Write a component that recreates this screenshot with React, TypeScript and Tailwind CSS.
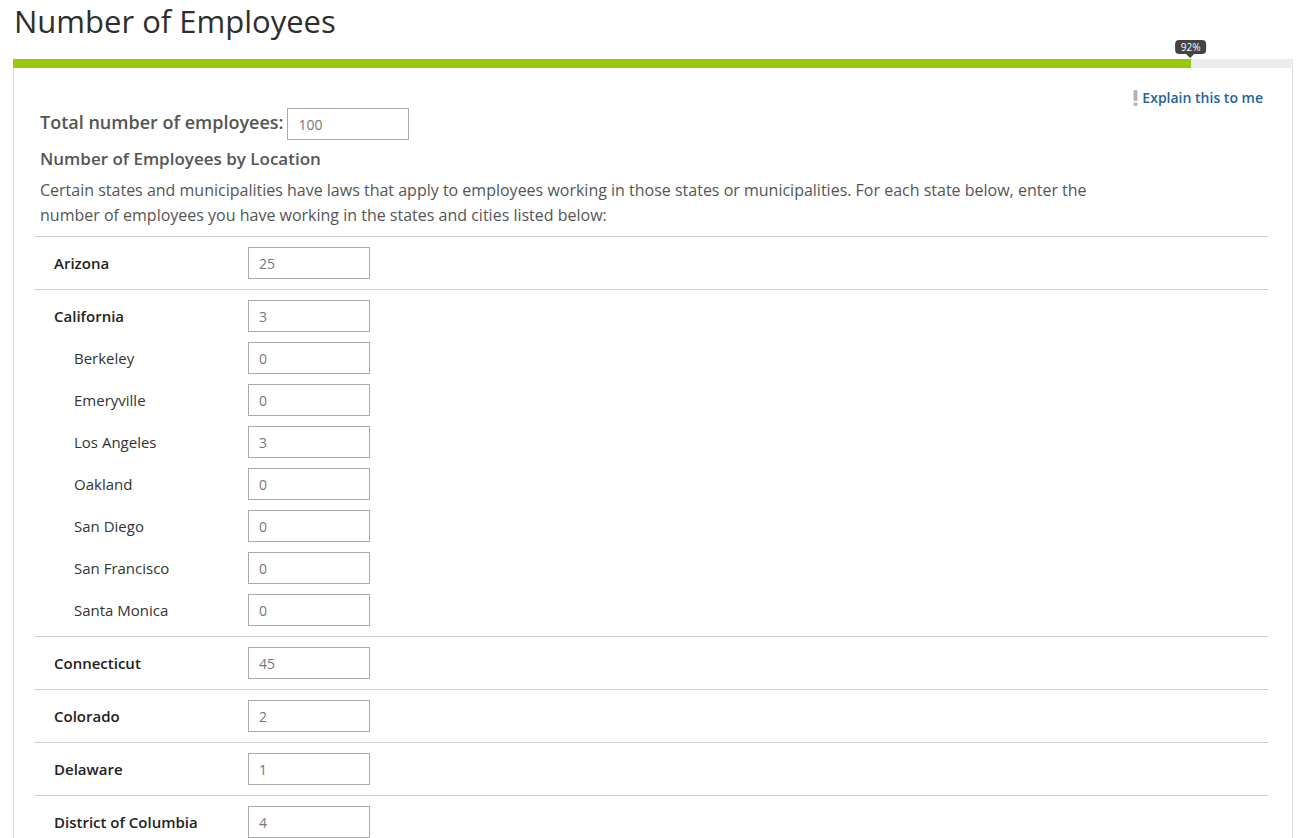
import React from "react";

interface Location {
  name: string;
  value: string;
  cities?: { name: string; value: string }[];
}

const LOCATIONS: Location[] = [
  { name: "Arizona", value: "25" },
  {
    name: "California",
    value: "3",
    cities: [
      { name: "Berkeley", value: "0" },
      { name: "Emeryville", value: "0" },
      { name: "Los Angeles", value: "3" },
      { name: "Oakland", value: "0" },
      { name: "San Diego", value: "0" },
      { name: "San Francisco", value: "0" },
      { name: "Santa Monica", value: "0" },
    ],
  },
  { name: "Connecticut", value: "45" },
  { name: "Colorado", value: "2" },
  { name: "Delaware", value: "1" },
  { name: "District of Columbia", value: "4" },
];

const PROGRESS = 92;

function NumberInput({ value }: { value: string }) {
  return (
    <input
      type="text"
      defaultValue={value}
      className="h-[32px] w-[122px] border border-[#ababab] bg-white px-[10px] text-[14px] text-[#777] outline-none"
    />
  );
}

export default function App() {
  return (
    <div className="h-[838px] overflow-hidden bg-white font-['Open_Sans',sans-serif]">
      {/* Page title */}
      <h1 className="pl-[14px] pt-[2px] text-[31px] leading-[38px] font-normal text-[#2e2e2e]">
        Number of Employees
      </h1>

      {/* Progress bar */}
      <div className="relative mx-[13px] mt-[19px] h-[9px] bg-[#ececec]">
        <div className="h-full bg-[#99c80c]" style={{ width: `${PROGRESS}%` }} />
        <div
          className="absolute bottom-full mb-[1px] -translate-x-1/2"
          style={{ left: `${PROGRESS}%` }}
        >
          <div className="rounded-[4px] bg-[#444] px-[6px] text-[10px] leading-[14px] text-white">
            {PROGRESS}%
          </div>
          <div className="mx-auto h-0 w-0 border-x-[4px] border-t-[4px] border-x-transparent border-t-[#444]" />
        </div>
      </div>

      {/* Panel */}
      <div className="mx-[13px] border border-t-0 border-[#dcdcdc] pl-[20px] pr-[24px] pt-[19px]">
        {/* Explain link */}
        <div className="flex h-[21px] items-center justify-end pr-[5px]">
          <a href="#" className="flex items-center gap-[4px] text-[14px] font-semibold text-[#22639b]">
            <svg width="5" height="16" viewBox="0 0 5 16">
              <rect x="0.5" y="0" width="4" height="11" rx="1" fill="#b5b5b5" />
              <rect x="0.5" y="12.5" width="4" height="3.5" rx="1" fill="#b5b5b5" />
            </svg>
            Explain this to me
          </a>
        </div>

        {/* Total */}
        <div className="flex items-center pl-[6px]">
          <label className="mr-[4px] mb-[3px] text-[18px] font-semibold text-[#555]">
            Total number of employees:
          </label>
          <NumberInput value="100" />
        </div>

        <h2 className="mt-[7px] pl-[6px] text-[17px] leading-[24px] font-semibold text-[#555]">
          Number of Employees by Location
        </h2>
        <p className="mb-[8px] mt-[7px] w-[1080px] pl-[6px] text-[16px] leading-[25px] text-[#555]">
          Certain states and municipalities have laws that apply to employees working in those
          states or municipalities. For each state below, enter the number of employees you have
          working in the states and cities listed below:
        </p>

        {/* Location rows */}
        <div>
          {LOCATIONS.map((loc) => (
            <div key={loc.name} className="flex flex-col gap-[10px] border-t border-[#cfcfcf] py-[10px]">
              <div className="flex items-center">
                <span className="w-[214px] pl-[20px] text-[15px] font-semibold text-[#222]">
                  {loc.name}
                </span>
                <NumberInput value={loc.value} />
              </div>
              {loc.cities?.map((city) => (
                <div key={city.name} className="flex items-center">
                  <span className="w-[214px] pl-[40px] text-[15px] text-[#333]">{city.name}</span>
                  <NumberInput value={city.value} />
                </div>
              ))}
            </div>
          ))}
        </div>
      </div>
    </div>
  );
}
